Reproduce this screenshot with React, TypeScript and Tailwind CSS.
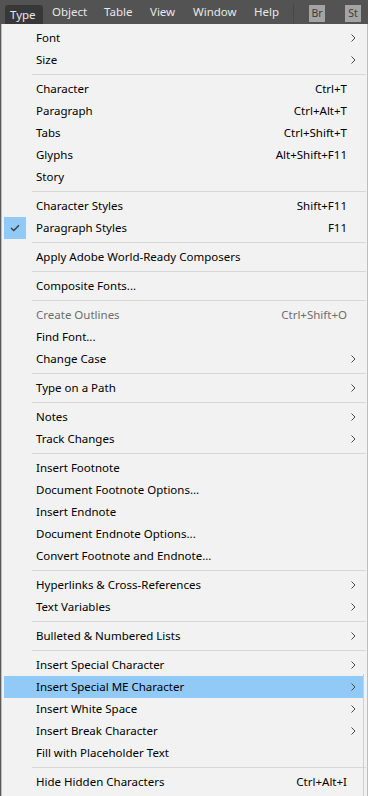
import React from 'react'

type Item = {
  label?: string
  shortcut?: string
  sub?: boolean
  checked?: boolean
  disabled?: boolean
  active?: boolean
  sep?: boolean
}

const items: Item[] = [
  { label: 'Font', sub: true },
  { label: 'Size', sub: true },
  { sep: true },
  { label: 'Character', shortcut: 'Ctrl+T' },
  { label: 'Paragraph', shortcut: 'Ctrl+Alt+T' },
  { label: 'Tabs', shortcut: 'Ctrl+Shift+T' },
  { label: 'Glyphs', shortcut: 'Alt+Shift+F11' },
  { label: 'Story' },
  { sep: true },
  { label: 'Character Styles', shortcut: 'Shift+F11' },
  { label: 'Paragraph Styles', shortcut: 'F11', checked: true },
  { sep: true },
  { label: 'Apply Adobe World-Ready Composers' },
  { sep: true },
  { label: 'Composite Fonts...' },
  { sep: true },
  { label: 'Create Outlines', shortcut: 'Ctrl+Shift+O', disabled: true },
  { label: 'Find Font...' },
  { label: 'Change Case', sub: true },
  { sep: true },
  { label: 'Type on a Path', sub: true },
  { sep: true },
  { label: 'Notes', sub: true },
  { label: 'Track Changes', sub: true },
  { sep: true },
  { label: 'Insert Footnote' },
  { label: 'Document Footnote Options...' },
  { label: 'Insert Endnote' },
  { label: 'Document Endnote Options...' },
  { label: 'Convert Footnote and Endnote...' },
  { sep: true },
  { label: 'Hyperlinks & Cross-References', sub: true },
  { label: 'Text Variables', sub: true },
  { sep: true },
  { label: 'Bulleted & Numbered Lists', sub: true },
  { sep: true },
  { label: 'Insert Special Character', sub: true },
  { label: 'Insert Special ME Character', sub: true, active: true },
  { label: 'Insert White Space', sub: true },
  { label: 'Insert Break Character', sub: true },
  { label: 'Fill with Placeholder Text' },
  { sep: true },
  { label: 'Hide Hidden Characters', shortcut: 'Ctrl+Alt+I' },
]

const Chevron = () => (
  <svg width="5" height="8" viewBox="0 0 5 8" className="absolute right-[7px] top-[7px]">
    <path d="M0.5 0.5 L4 4 L0.5 7.5" fill="none" stroke="#4a4a4a" strokeWidth="1" />
  </svg>
)

const Check = () => (
  <div className="absolute left-0 top-0 flex h-[22px] w-[22px] items-center justify-center bg-[#91c9f7]">
    <svg width="10" height="8" viewBox="0 0 10 8">
      <path d="M1 4 L3.8 6.6 L9 1.2" fill="none" stroke="#3a3f44" strokeWidth="1.4" />
    </svg>
  </div>
)

const MenuRow = ({ item }: { item: Item }) => {
  if (item.sep) {
    return (
      <div className="flex h-[7px] items-center pl-[30px] pr-[1px]">
        <div className="h-px w-full bg-[#d7d7d7]" />
      </div>
    )
  }
  return (
    <div
      className={`relative ml-[2px] mr-[4px] flex h-[22px] items-center pl-[32px] pr-[16px] ${
        item.active ? 'bg-[#91c9f7]' : ''
      } ${item.disabled ? 'text-[#6d6d6d]' : 'text-[#000000]'}`}
    >
      {item.checked && <Check />}
      <span className="flex-1 whitespace-nowrap">{item.label}</span>
      {item.shortcut && <span className="whitespace-nowrap">{item.shortcut}</span>}
      {item.sub && <Chevron />}
    </div>
  )
}

const MenuBar = () => (
  <div className="flex h-[24px] items-end bg-[#535353] text-[11.5px] text-[#e8e8e8]">
    <div className="ml-[5px] flex h-[19px] w-[38px] items-center rounded-t-[3px] bg-[#383838] pl-[5px]">
      Type
    </div>
    <span className="ml-[9px] w-[52px] pb-[4px]">Object</span>
    <span className="w-[46px] pb-[4px]">Table</span>
    <span className="w-[43px] pb-[4px]">View</span>
    <span className="w-[61px] pb-[4px]">Window</span>
    <span className="w-[39px] pb-[4px]">Help</span>
    <div className="mb-[1px] h-[20px] w-px bg-[#484848]" />
    <div className="mb-[2px] ml-[15px] flex h-[17px] w-[16px] items-center justify-center bg-[#a4a4a4] text-[10.5px] text-[#3c3c3c]">
      Br
    </div>
    <div className="mb-[2px] ml-[20px] flex h-[17px] w-[16px] items-center justify-center bg-[#a4a4a4] text-[10.5px] text-[#3c3c3c]">
      St
    </div>
  </div>
)

export default function App() {
  return (
    <div
      className="flex h-[796px] w-[368px] flex-col overflow-hidden bg-[#535353]"
      style={{ fontFamily: '"Noto Sans", "Open Sans", sans-serif' }}
    >
      <MenuBar />
      <div className="flex flex-1">
        <div className="w-px bg-[#5c5c5c]" />
        <div className="relative flex-1 border-l border-r border-[#bdbdbd] bg-[#f2f2f2] pt-[3px] text-[11.5px]">
          {items.map((item, i) => (
            <MenuRow key={i} item={item} />
          ))}
          <div className="absolute right-[3px] top-[650px] h-[146px] w-px bg-[#cfcfcf]" />
        </div>
      </div>
    </div>
  )
}
